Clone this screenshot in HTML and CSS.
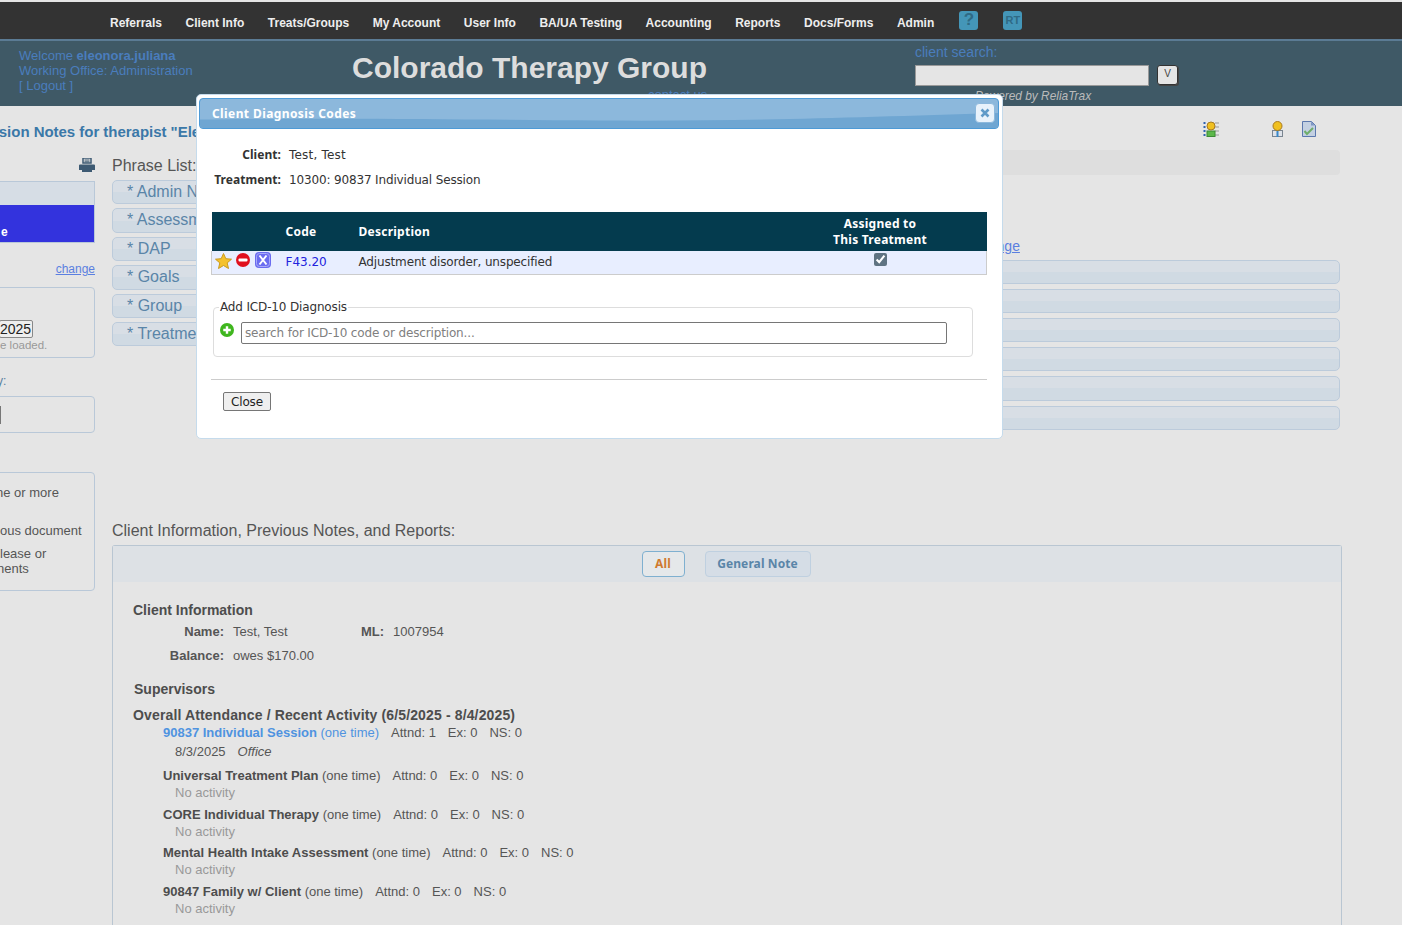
FILE: index.html
```html
<!DOCTYPE html>
<html lang="en">
<head>
<meta charset="utf-8">
<title>Colorado Therapy Group</title>
<link rel="stylesheet" href="styles.css">
</head>
<body>
<nav class="nav">
  <a>Referrals</a><a>Client Info</a><a>Treats/Groups</a><a>My Account</a><a>User Info</a><a>BA/UA Testing</a><a>Accounting</a><a>Reports</a><a>Docs/Forms</a><a>Admin</a>
  <span class="nav-ico q">?</span><span class="nav-ico rt">RT</span>
</nav>
<header class="head">
  <div class="welcome">
    <div>Welcome <b>eleonora.juliana</b></div>
    <div>Working Office: Administration</div>
    <div>[ Logout ]</div>
  </div>
  <div class="brand">
    <div class="brand-name">Colorado Therapy Group</div>
    <div class="contact">contact us</div>
  </div>
  <div class="search">
    <div class="search-label">client search:</div>
    <div class="search-row"><span class="search-input"></span><span class="search-btn">V</span></div>
    <div class="powered">Powered by ReliaTrax</div>
  </div>
</header>
<div class="title-row">
  <h1 class="page-title">Supervision Notes for therapist "Eleonora Juliana"</h1>
  <div class="tools">
    <svg class="t1" width="16" height="16" viewBox="0 0 16 16"><path d="M0 2h3M0 6h3M0 10h3M0 14h3M1.500 1v2M1.500 5v2M1.500 9v2M1.500 13v2" stroke="#2f62b0" fill="none"/><path d="M12 2h4M12 6h4M12 10h4M12 14h4" stroke="#999" fill="none"/><rect x="4" y="10" width="8" height="5.500" fill="#5cb84a" stroke="#3b8a35"/><circle cx="8" cy="5" r="4" fill="#f0c020" stroke="#a87a20"/></svg>
    <svg class="t2" width="11" height="16" viewBox="0 0 11 16"><rect x=".5" y="9.500" width="10" height="6" fill="#dfe3ea" stroke="#7a8590"/><rect x="4.500" y="9" width="2" height="7" fill="#3b88c8"/><circle cx="5.500" cy="5" r="4.500" fill="#f0c020" stroke="#a87a20"/></svg>
    <svg class="t3" width="14" height="16" viewBox="0 0 14 16"><path d="M.5.500h9l4 4v11H.5z" fill="#c3d0e2" stroke="#5b78ae"/><path d="M9 .5v4h4z" fill="#7f97c4"/><path d="M2.500 10l2.500 3 6-6" stroke="#6fae6a" stroke-width="2" fill="none"/></svg>
  </div>
</div>
<main class="main">
  <aside class="side">
    <div class="print-row">
      <svg width="16" height="14" viewBox="0 0 16 14"><path d="M4 0h8v5H4z" fill="none" stroke="#3d5a73" stroke-width="1.500"/><path d="M5.500 2h5M5.500 3.800h5" stroke="#3d5a73"/><path d="M1 6.500h14a1 1 0 0 1 1 1V12H0V7.500a1 1 0 0 1 1-1z" fill="#3d5a73"/><rect x="3" y="11" width="10" height="3" fill="#3d5a73"/></svg>
    </div>
    <div class="box box-status">
      <div class="status-top"></div>
      <div class="status-sel">e</div>
    </div>
    <a class="change">change</a>
    <div class="box box-date">
      <input class="date" type="text" value="2025" aria-label="Date">
      <div class="hint">e loaded.</div>
    </div>
    <div class="by">y:</div>
    <div class="box box-select"><span class="sel-edge"></span></div>
    <div class="box box-help">
      <p class="h1">ne or more</p>
      <p class="h2">ous document</p>
      <p class="h3">lease or</p>
      <p class="h4">nents</p>
    </div>
  </aside>
  <section class="content">
    <div class="work">
      <div class="phrases">
        <div class="section-label">Phrase List:</div>
        <div class="bar ph">* Admin Note</div>
        <div class="bar ph tall">* Assessment</div>
        <div class="bar ph">* DAP</div>
        <div class="bar ph tall">* Goals</div>
        <div class="bar ph">* Group</div>
        <div class="bar ph">* Treatment</div>
      </div>
      <div class="notes">
        <div class="note-top"></div>
        <a class="note-link">change</a>
        <div class="bar"></div>
        <div class="bar"></div>
        <div class="bar"></div>
        <div class="bar"></div>
        <div class="bar tall"></div>
        <div class="bar"></div>
      </div>
    </div>
    <div class="section-label info-label">Client Information, Previous Notes, and Reports:</div>
    <div class="panel">
      <div class="tabs"><span class="tab tab-on">All</span><span class="tab">General Note</span></div>
      <div class="panel-body">
        <div class="sec first">Client Information</div>
        <div class="kv r1"><span class="k">Name:</span><span class="v v-name">Test, Test</span><span class="k2">ML:</span><span class="v">1007954</span></div>
        <div class="kv r2"><span class="k">Balance:</span><span class="v">owes $170.00</span></div>
        <div class="sec sup">Supervisors</div>
        <div class="sec over">Overall Attendance / Recent Activity (6/5/2025 - 8/4/2025)</div>
        <div class="act on"><b>90837 Individual Session</b> (one time)<span class="st">Attnd: 1</span><span class="st">Ex: 0</span><span class="st">NS: 0</span></div>
        <div class="when">8/3/2025<i>Office</i></div>
        <div class="act a2"><b>Universal Treatment Plan</b> (one time)<span class="st">Attnd: 0</span><span class="st">Ex: 0</span><span class="st">NS: 0</span></div>
        <div class="none">No activity</div>
        <div class="act"><b>CORE Individual Therapy</b> (one time)<span class="st">Attnd: 0</span><span class="st">Ex: 0</span><span class="st">NS: 0</span></div>
        <div class="none">No activity</div>
        <div class="act a4"><b>Mental Health Intake Assessment</b> (one time)<span class="st">Attnd: 0</span><span class="st">Ex: 0</span><span class="st">NS: 0</span></div>
        <div class="none">No activity</div>
        <div class="act"><b>90847 Family w/ Client</b> (one time)<span class="st">Attnd: 0</span><span class="st">Ex: 0</span><span class="st">NS: 0</span></div>
        <div class="none">No activity</div>
      </div>
    </div>
  </section>
</main>
<div class="modal" role="dialog">
  <div class="m-title">
    <svg class="m-wave" viewBox="0 0 800 31" preserveAspectRatio="none"><path d="M0 22C150 20 260 22 400 23S650 20 800 15V31H0z" fill="#6fa6d2"/></svg>
    <span class="m-title-text">Client Diagnosis Codes</span>
    <span class="m-close"><svg width="10" height="10" viewBox="0 0 10 10"><path d="M1.500 1.500l7 7M8.500 1.500l-7 7" stroke="#5f9ac8" stroke-width="2.600"/></svg></span>
  </div>
  <div class="m-info">
    <div class="m-line"><span class="m-k">Client:</span><span class="wide">Test, Test</span></div>
    <div class="m-line"><span class="m-k">Treatment:</span><span>10300: 90837 Individual Session</span></div>
  </div>
  <table class="codes">
    <thead>
      <tr><th class="c-ico"></th><th class="c-code">Code</th><th class="c-desc">Description</th><th class="c-asg">Assigned to<br>This Treatment</th></tr>
    </thead>
    <tbody>
      <tr>
        <td class="c-ico">
          <svg width="17" height="16" viewBox="0 0 17 16"><path d="M8.500.5l2.300 5.200 5.700.5-4.300 3.700 1.300 5.600-5-3-5 3 1.300-5.600L.5 6.200l5.700-.5z" fill="#f5c22c" stroke="#c99a1c"/></svg>
          <svg class="minus-ico" width="14" height="14" viewBox="0 0 14 14"><circle cx="7" cy="7" r="7" fill="#e0101e"/><rect x="2.500" y="5.500" width="9" height="3" rx="1" fill="#fff"/></svg>
          <svg class="x-ico" width="16" height="16" viewBox="0 0 16 16"><rect width="16" height="16" rx="4" fill="#6a6cf0"/><rect x="1.500" y="1.500" width="13" height="13" rx="3" fill="none" stroke="#a9aaf8"/><path d="M4.500 3.500l7 9M11.500 3.500l-7 9" stroke="#fff" stroke-width="2"/></svg>
        </td>
        <td class="c-code"><a>F43.20</a></td>
        <td class="c-desc">Adjustment disorder, unspecified</td>
        <td class="c-asg"><input class="chk" type="checkbox" checked aria-label="Assigned"></td>
      </tr>
    </tbody>
  </table>
  <fieldset class="add">
    <legend>Add ICD-10 Diagnosis</legend>
    <svg width="14" height="14" viewBox="0 0 15 15"><circle cx="7.500" cy="7.500" r="7.500" fill="#3fb61e"/><path d="M7.500 3.500v8M3.500 7.500h8" stroke="#fff" stroke-width="2.600"/></svg>
    <input class="icd" type="text" placeholder="search for ICD-10 code or description...">
  </fieldset>
  <hr class="m-rule">
  <button class="m-btn" type="button">Close</button>
</div>
</body>
</html>
```
FILE: styles.css
```css
html, body { height: 100%; overflow: hidden; }
body { margin: 0; padding-top: 2px; box-sizing: border-box; background: #e5e5e5; font-family: "Liberation Sans", Arial, sans-serif; color: #555; position: relative; border-top: 0; }
html { background: #fff; }

.nav { height: 37px; background: #333; display: flex; align-items: center; padding: 4px 0 0 110px; box-sizing: border-box; }
.nav a { font-size: 12px; font-weight: bold; color: #eee; margin-right: 23.550px; }
.nav-ico { width: 19px; height: 19px; border-radius: 3px; background: #4496b8; color: #2f6a85; display: flex; align-items: center; justify-content: center; font-weight: bold; margin-top: -5px; }
.q { font-size: 17px; margin-left: 1.500px; margin-right: 25px; }
.rt { font-size: 11px; }

.head { height: 67px; box-sizing: border-box; border-top: 2px solid #5b7b94; background: #3f5966; display: flex; padding-left: 19px; overflow: hidden; }
.welcome { width: 333px; padding-top: 7px; font-size: 13px; line-height: 15px; color: #4a7dbd; }
.brand { width: 563px; position: relative; }
.brand-name { font-size: 30px; font-weight: bold; color: #ddd; line-height: 36px; margin-top: 9px; }
.contact { font-size: 13px; color: #4a7dbd; margin: 2px 0 0 296px; line-height: 14px; }
.search-label { font-size: 14px; color: #4a7dbd; line-height: 16px; margin-top: 3px; }
.search-row { display: flex; align-items: flex-start; margin-top: 5px; }
.search-input { width: 232px; height: 19px; background: #e5e5e5; border: 1px solid #999; display: block; }
.search-btn { width: 21px; height: 20px; margin-left: 8px; box-sizing: border-box; background: #e5e5e5; border: 1px solid #333; border-radius: 3px; box-shadow: 1px 1px 0 #444; font-size: 10px; color: #444; text-align: center; line-height: 16px; }
.powered { font-size: 11.900px; font-style: italic; color: #bbb; margin: 3px 0 0 60px; line-height: 14px; }

.title-row { height: 44px; display: flex; justify-content: space-between; }
.page-title { margin: 17px 0 0 -56px; font-size: 15px; line-height: 18px; letter-spacing: -.03px; color: #3b78a8; white-space: nowrap; }
.tools { display: flex; align-items: flex-start; padding: 15px 86px 0 0; }
.t2 { margin-left: 53px; }
.t3 { margin-left: 19px; }

.main { display: grid; grid-template-columns: 95px 1228px; column-gap: 17px; }
.side { min-width: 0; }
.print-row { height: 31px; display: flex; justify-content: flex-end; align-items: flex-start; padding-top: 8px; box-sizing: border-box; }
.box { margin-left: -20px; border: 1px solid #b9c8d8; border-radius: 4px; box-sizing: border-box; }
.box-status { height: 62px; border-radius: 0; background: #d6dde5; }
.status-top { height: 23px; }
.status-sel { height: 37px; background: #3333dd; color: #fff; font-size: 12px; font-weight: bold; line-height: 12px; padding: 21px 0 0 20px; box-sizing: border-box; }
.change { display: block; text-align: right; font-size: 12px; line-height: 16px; margin-top: 18px; color: #5b7fe0; text-decoration: underline; }
.box-date { height: 71px; margin-top: 10px; padding: 32px 0 0 18px; }
.date { display: block; width: 34px; height: 18px; box-sizing: border-box; border: 1px solid #888; border-radius: 2px; background: #eee; padding: 0; font: 14px "Liberation Sans", sans-serif; color: #222; }
.hint { font-size: 11.500px; line-height: 13px; color: #999; margin: 1px 0 0 1px; }
.by { font-size: 12px; line-height: 16px; margin: 15px 0 0 -3px; color: #5a7fa0; }
.box-select { height: 37px; margin-top: 7px; padding: 9px 0 0 19px; }
.sel-edge { display: block; width: 1px; height: 18px; background: #777; }
.box-help { height: 119px; margin-top: 39px; padding-left: 19px; font-size: 13px; line-height: 15.500px; color: #555; }
.box-help p { margin: 0; }
.box-help .h1 { padding-top: 12px; margin-left: -4px; }
.h2 { padding-top: 22px; }
.h3 { padding-top: 8px; }
.box-help .h4 { margin: -1px 0 0 -3px; }

.content { min-width: 0; }
.work { height: 372px; display: flex; justify-content: space-between; }
.phrases { width: 300px; }
.section-label { font-size: 16px; line-height: 31px; height: 30px; color: #555; }
.bar { height: 24px; box-sizing: border-box; border: 1px solid #bccbdb; border-radius: 5px; background: linear-gradient(#d8dee5 50%, #d0dae3 50%); }
.tall { height: 25px; }
.ph { margin-bottom: 4px; font-size: 16px; line-height: 22px; padding-left: 14px; color: #5a85a8; }
.notes { width: 820px; }
.notes .bar { margin-bottom: 5px; }
.note-top { height: 25px; background: #dedede; border-radius: 4px; }
.note-link { display: block; font-size: 14px; line-height: 16px; margin: 63px 0 6px; padding-left: 454px; color: #5b7fe0; text-decoration: underline; }
.info-label { height: 23px; line-height: 18px; }

.panel { width: 1230px; border: 1px solid #b9c6d2; border-bottom: 0; border-radius: 3px 3px 0 0; box-sizing: border-box; padding-bottom: 60px; }
.tabs { height: 36px; background: #dde1e5; display: flex; justify-content: center; align-items: flex-start; padding: 5px 2px 0 0; box-sizing: border-box; }
.tab { width: 106px; height: 26px; box-sizing: border-box; border: 1px solid #bfd0e0; border-radius: 4px; background: #d5dde6; color: #5a85a8; font: bold 12px/24px "Noto Sans", sans-serif; letter-spacing: .1px; text-align: center; margin-left: 20px; }
.tab-on { width: 43px; background: #e5e8ea; border-color: #7fb0d0; color: #d07a30; margin-left: 0; }
.panel-body { padding-left: 20px; font-size: 13px; line-height: 16px; }
.sec { font-size: 14px; font-weight: bold; color: #4d4d4d; }
.first { margin-top: 20px; }
.kv { display: flex; }
.r1 { margin-top: 6px; }
.r2 { margin-top: 8px; }
.k { width: 91px; text-align: right; font-weight: bold; margin-right: 9px; }
.k2 { font-weight: bold; margin-right: 9px; }
.v-name { width: 128px; }
.sup { margin: 17px 0 0 1px; }
.over { margin-top: 10px; letter-spacing: .14px; }
.act { margin: 6px 0 0 30px; color: #555; }
.act b { color: #4d4d4d; }
.over + .act { margin-top: 2px; }
.on, .on b { color: #4f93e0; }
.st { color: #555; margin-left: 12px; }
.when { margin: 3px 0 0 42px; }
.when i { margin-left: 12px; }
.none { margin: 1px 0 0 42px; color: #999; }
.a2 { margin-top: 8px; }
.a4 { margin-top: 5px; }

.modal { position: absolute; left: 196px; top: 94px; width: 807px; height: 345px; box-sizing: border-box; background: #fff; border: 1px solid #c5dbec; border-radius: 5px; padding: 3px 3px 0 2px; font: 12px/14px "DejaVu Sans", Verdana, sans-serif; letter-spacing: -.15px; color: #333; }
.m-title { height: 31px; box-sizing: border-box; border: 1px solid #4d9ad6; border-radius: 4px; background: #8cb8dc; position: relative; overflow: hidden; color: #fff; font: bold 12px/14px "Noto Sans", sans-serif; letter-spacing: .4px; display: flex; align-items: center; padding-left: 12px; }
.m-wave { position: absolute; left: 0; top: 0; width: 100%; height: 100%; }
.m-title-text { position: relative; }
.m-close { position: absolute; right: 3px; top: 4px; width: 20px; height: 20px; box-sizing: border-box; border: 1px solid #8cb8dc; border-radius: 4px; background: #e8f2fb; display: flex; align-items: center; justify-content: center; }
.m-info { padding-top: 19px; height: 83px; box-sizing: border-box; }
.m-line { display: flex; height: 25px; }
.m-k { width: 82px; margin-right: 8px; text-align: right; font: bold 12px/14px "Noto Sans", sans-serif; letter-spacing: .05px; }
.wide { letter-spacing: .2px; }
.codes { width: 776px; margin-left: 12px; border-collapse: collapse; table-layout: fixed; }
.codes th { background: #043b4e; color: #fff; font: bold 12px/14px "Noto Sans", sans-serif; letter-spacing: .25px; height: 39px; padding: 0; text-align: left; }
.codes td { background: #e8eeff; height: 21px; padding: 0 0 2px; border-bottom: 1px solid #ccc; }
.codes td:first-child { border-left: 1px solid #ccc; }
.codes td:last-child { border-right: 1px solid #ccc; }
.c-ico { width: 74px; }
.codes td.c-ico { white-space: nowrap; vertical-align: top; padding: 0; }
td.c-ico svg { vertical-align: top; margin: 2px 0 0 3px; }
td.c-ico svg.minus-ico { margin: 2px 0 0; }
td.c-ico svg.x-ico { margin: 1px 0 0 2px; }
.c-code { width: 73px; }
.c-code a { color: #2222dd; letter-spacing: 0; }
.codes th.c-asg { width: 213px; text-align: center; line-height: 16px; }
.codes td.c-asg { text-align: center; vertical-align: top; padding: 0; }
.chk { width: 13px; height: 13px; margin: 2px 0 0 1px; accent-color: #5f7382; vertical-align: top; }
.add { width: 760px; height: 57px; margin: 25px 0 0 14px; box-sizing: border-box; border: 1px solid #ddd; border-radius: 4px; padding: 0 0 0 6px; display: flex; align-items: flex-start; }
.add legend { padding: 0 1px; margin-left: -1px; line-height: 14px; }
.add svg { margin-top: 9px; flex: none; }
.icd { width: 706px; height: 22px; box-sizing: border-box; margin: 8px 0 0 7px; border: 1px solid #767676; border-radius: 2px; padding: 0 3px; font: 12px "DejaVu Sans", Verdana, sans-serif; letter-spacing: -.15px; }
.icd::placeholder { color: #808080; }
.m-rule { width: 776px; margin: 22px 0 0 12px; border: 0; border-top: 1px solid #ccc; }
.m-btn { display: block; width: 48px; height: 19px; margin: 12px 0 0 24px; padding: 0; box-sizing: border-box; background: #efefef; border: 1px solid #767676; border-radius: 2px; font: 12px "DejaVu Sans", Verdana, sans-serif; letter-spacing: -.15px; color: #222; }
```
